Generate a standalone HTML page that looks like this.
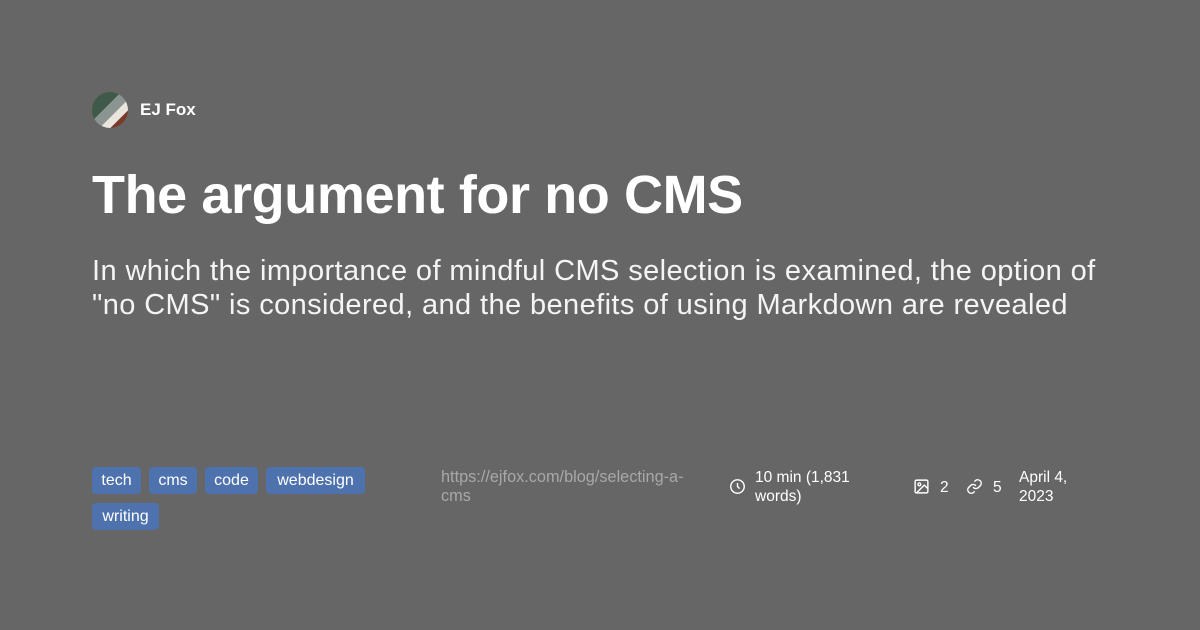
<!DOCTYPE html>
<html><head><style>
body{margin:0;width:1200px;height:630px;background:#666666;font-family:"Liberation Sans",sans-serif;color:#fff;position:relative;overflow:hidden}
.av{position:absolute;left:92px;top:92px;width:36px;height:36px;border-radius:50%;background:linear-gradient(135deg,#3f5a48 0 40%,#8a9490 41% 60%,#e8e4de 61% 75%,#7a3a2a 76%);overflow:hidden}
.name{position:absolute;left:140px;top:100px;font-size:17px;font-weight:bold}
h1{position:absolute;left:92px;top:164px;margin:0;font-size:54px;font-weight:bold;letter-spacing:-0.4px;line-height:62px}
.sub{position:absolute;left:92px;top:254px;white-space:nowrap;font-size:29px;letter-spacing:0.4px;line-height:34px;color:#f4f4f4}
.tag{position:absolute;height:27px;line-height:27px;background:#4e72ae;border-radius:4px;font-size:16px;text-align:center;color:#fff}
.url{position:absolute;left:441px;top:468px;font-size:16.3px;line-height:19px;color:#a8a8a8;white-space:nowrap}
.m{position:absolute;font-size:15.5px;line-height:19px;color:#fff}
svg{position:absolute}
</style></head><body>
<div class="av"></div>
<div class="name">EJ Fox</div>
<h1>The argument for no CMS</h1>
<div class="sub">In which the importance of mindful CMS selection is examined, the option of<br>"no CMS" is considered, and the benefits of using Markdown are revealed</div>
<div class="tag" style="left:92px;top:467px;width:49px">tech</div>
<div class="tag" style="left:149px;top:467px;width:48px">cms</div>
<div class="tag" style="left:205px;top:467px;width:53px">code</div>
<div class="tag" style="left:266px;top:467px;width:99px">webdesign</div>
<div class="tag" style="left:92px;top:503px;width:67px">writing</div>
<div class="url">https://ejfox.com/blog/selecting-a-<br>cms</div>
<svg style="left:729px;top:478px" width="17" height="17" viewBox="0 0 24 24" fill="none" stroke="#fff" stroke-width="2"><circle cx="12" cy="12" r="9.5"/><path d="M12 7v5l3 3"/></svg>
<div class="m" style="left:755px;top:468px">10 min (1,831<br>words)</div>
<svg style="left:913px;top:478px" width="17" height="17" viewBox="0 0 24 24" fill="none" stroke="#fff" stroke-width="2"><rect x="3" y="3" width="18" height="18" rx="2"/><circle cx="9" cy="9" r="2"/><path d="M21 15l-5-5L5 21"/></svg>
<div class="m" style="left:940px;top:478px">2</div>
<svg style="left:966px;top:478px" width="17" height="17" viewBox="0 0 24 24" fill="none" stroke="#fff" stroke-width="2"><path d="M10 13a5 5 0 0 0 7.5.5l3-3a5 5 0 0 0-7-7l-1.7 1.7"/><path d="M14 11a5 5 0 0 0-7.5-.5l-3 3a5 5 0 0 0 7 7l1.7-1.7"/></svg>
<div class="m" style="left:993px;top:478px">5</div>
<div class="m" style="left:1019px;top:468px">April 4,<br>2023</div>
</body></html>
